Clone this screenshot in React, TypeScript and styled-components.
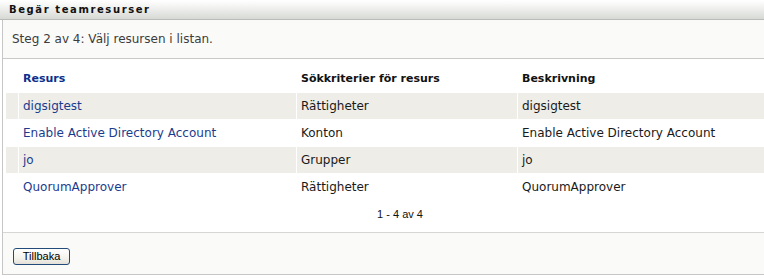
import React from "react";
import styled, { createGlobalStyle } from "styled-components";

const Global = createGlobalStyle`
  html, body { margin: 0; padding: 0; overflow: hidden; background: #fff; }
  body { font-family: "DejaVu Sans", Verdana, sans-serif; }
`;

const Page = styled.div`
  width: 798px;
`;

const TitleBar = styled.div`
  height: 19px;
  border-bottom: 1px solid #b9bbb7;
  background: linear-gradient(to bottom, #ffffff 0%, #f3f4f2 35%, #d7d9d5 100%);
  padding-left: 9px;
  display: flex;
  align-items: center;
  font-family: "DejaVu Sans", Verdana, sans-serif;
  font-weight: bold;
  font-size: 10px;
  letter-spacing: 1.6px;
  color: #111;
`;

const Panel = styled.div`
  margin-left: 2px;
  border-left: 1px solid #c6c6c6;
  border-right: 1px solid #c6c6c6;
  border-bottom: 1px solid #c6c6c6;
`;

const StepRow = styled.div`
  height: 38px;
  display: flex;
  align-items: center;
  padding-left: 9px;
  background: #fafaf8;
  border-bottom: 1px solid #c9c9c7;
  font-size: 12px;
  color: #3c3c3c;
`;

const Content = styled.div`
  padding: 6px 2px 4px 2px;
  border-bottom: 1px solid #d6d6d4;
`;

const Table = styled.table`
  width: 100%;
  border-collapse: separate;
  border-spacing: 1px;
  table-layout: fixed;
  font-size: 12px;
  line-height: 14px;
`;

const HeadCell = styled.th<{ $link?: boolean; $w?: number }>`
  height: 26px;
  padding: 0 0 0 4px;
  text-align: left;
  font-size: 11px;
  font-weight: bold;
  color: ${(p) => (p.$link ? "#0d2f8c" : "#111")};
  width: ${(p) => (p.$w ? `${p.$w}px` : "auto")};
  box-sizing: border-box;
  vertical-align: middle;
`;

const Row = styled.tr<{ $striped: boolean }>`
  background: ${(p) => (p.$striped ? "#eeede8" : "#ffffff")};
`;

const Cell = styled.td`
  height: 26px;
  padding: 0 0 0 4px;
  color: #1a1a1a;
  vertical-align: middle;
  white-space: nowrap;
  overflow: hidden;
`;

const LinkText = styled.a`
  color: #1b3c8e;
  text-decoration: none;
  cursor: pointer;
`;

const PagerCell = styled.td`
  height: 26px;
  padding: 0;
  text-align: center;
  font-family: "Liberation Sans", Arial, sans-serif;
  font-size: 11px;
  color: #111;
  vertical-align: middle;
`;

const Footer = styled.div`
  height: 41px;
  background: #fafaf8;
  padding: 12px 0 0 10px;
  box-sizing: border-box;
`;

const Button = styled.button`
  height: 17px;
  width: 57px;
  padding: 0;
  border: 1px solid #234b7a;
  border-radius: 3px;
  background: linear-gradient(to bottom, #ffffff 0%, #f4f3ee 60%, #e2e0d6 100%);
  font-family: "Liberation Sans", Arial, sans-serif;
  font-size: 11px;
  color: #000;
  line-height: 15px;
  cursor: pointer;
`;

const rows = [
  { name: "digsigtest", crit: "Rättigheter", desc: "digsigtest" },
  { name: "Enable Active Directory Account", crit: "Konton", desc: "Enable Active Directory Account" },
  { name: "jo", crit: "Grupper", desc: "jo" },
  { name: "QuorumApprover", crit: "Rättigheter", desc: "QuorumApprover" },
];

export default function App() {
  return (
    <Page>
      <Global />
      <TitleBar>Begär teamresurser</TitleBar>
      <Panel>
        <StepRow>Steg 2 av 4: Välj resursen i listan.</StepRow>
        <Content>
          <Table>
            <thead>
              <tr>
                <HeadCell $w={12} style={{ padding: 0 }}></HeadCell>
                <HeadCell $link $w={277}>Resurs</HeadCell>
                <HeadCell $w={220}>Sökkriterier för resurs</HeadCell>
                <HeadCell>Beskrivning</HeadCell>
              </tr>
            </thead>
            <tbody>
              {rows.map((r, i) => (
                <Row key={r.name} $striped={i % 2 === 0}>
                  <Cell />
                  <Cell>
                    <LinkText>{r.name}</LinkText>
                  </Cell>
                  <Cell>{r.crit}</Cell>
                  <Cell>{r.desc}</Cell>
                </Row>
              ))}
              <tr>
                <PagerCell colSpan={4}>1 - 4 av 4</PagerCell>
              </tr>
            </tbody>
          </Table>
        </Content>
        <Footer>
          <Button>Tillbaka</Button>
        </Footer>
      </Panel>
    </Page>
  );
}
